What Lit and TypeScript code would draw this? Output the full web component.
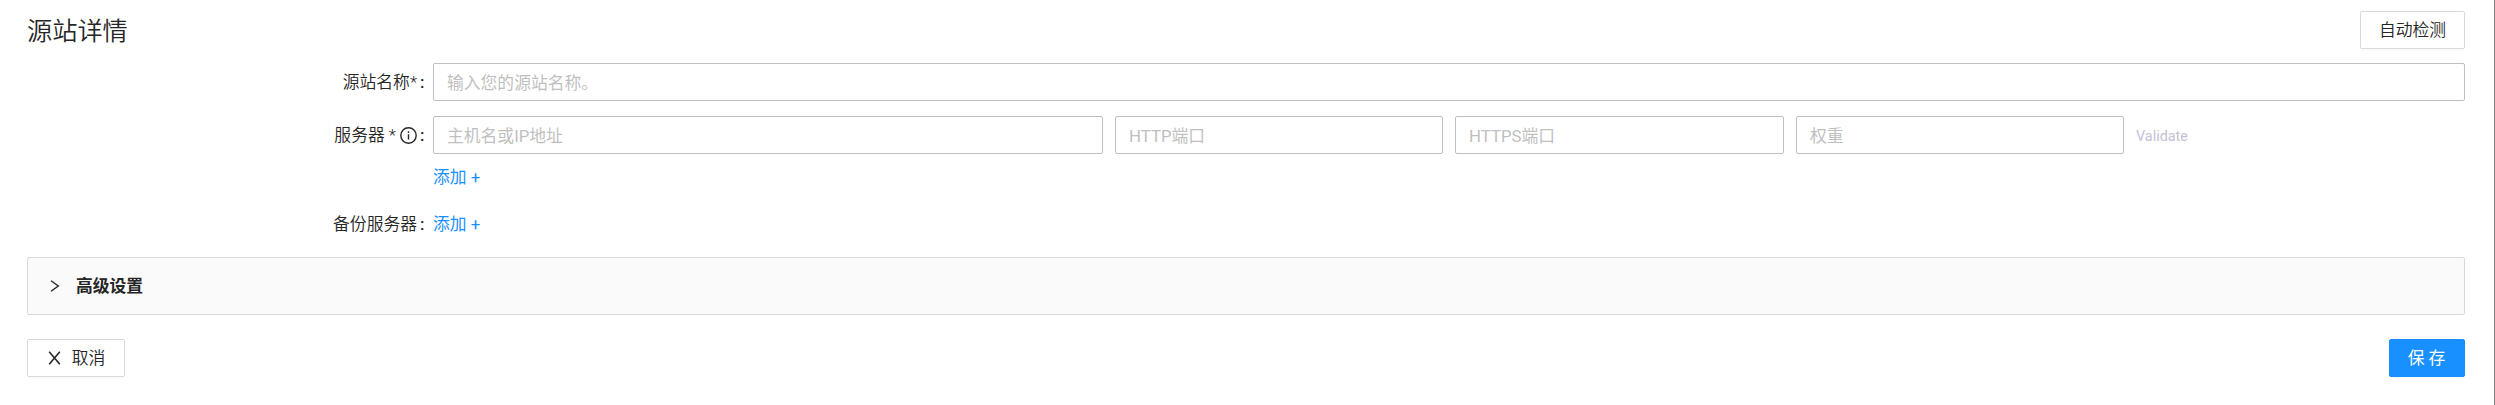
import { LitElement, html, css } from "lit";
import { customElement } from "lit/decorators.js";

@customElement("app-root")
export class AppRoot extends LitElement {
  static styles = css`
    :host {
      display: block;
      box-sizing: border-box;
      height: 405px;
      padding: 11px 29px 0 27px;
      border-right: 1px solid #808080;
      background: #fff;
      color: #262626;
      font-family: Roboto, "Noto Sans CJK SC", sans-serif;
      font-size: 16.8px;
      font-weight: 400;
      line-height: 26px;
    }
    * { box-sizing: border-box; }
    .head, .foot { display: flex; justify-content: space-between; height: 38px; }
    h1 { margin: 0; font-size: 25.2px; font-weight: 350; line-height: 41px; }
    button {
      display: flex;
      align-items: center;
      justify-content: center;
      height: 38px;
      padding: 0;
      border: 1px solid #d9d9d9;
      border-radius: 2px;
      background: #fff;
      box-shadow: 0 2px 0 rgba(0, 0, 0, 0.016);
      color: inherit;
      font: inherit;
      font-weight: 350;
    }
    .detect { width: 105px; }
    .cancel { width: 98px; gap: 11px; padding-left: 1px; }
    .save {
      width: 76px;
      border-color: #1890ff;
      background: #1890ff;
      color: #fff;
      font-weight: 400;
      letter-spacing: 4px;
      padding-left: 3px;
    }
    .row { display: grid; grid-template-columns: 396px 1fr; column-gap: 10px; }
    .name { margin-top: 14px; }
    .server { margin-top: 15px; }
    .label { display: flex; justify-content: flex-end; align-items: center; height: 38px; white-space: pre; font-weight: 350; }
    .colon { width: 3px; margin-left: 3px; font-weight: 500; }
    .fields { display: grid; grid-template-columns: 670px 328px 329px 328px auto; column-gap: 12px; align-items: center; }
    input {
      width: 100%;
      height: 38px;
      padding: 1px 13px 0;
      border: 1px solid #bfbfbf;
      border-radius: 2px;
      background: #fff;
      font: inherit;
      outline: none;
    }
    input::placeholder { color: #bfbfbf; opacity: 1; }
    .validate { color: #c5c1d4; font-size: 14.4px; padding-top: 3px; }
    .link { color: #1890ff; text-decoration: none; }
    .more { margin: 10px 0 0 406px; height: 26px; }
    .backup { margin-top: 15px; align-items: center; height: 38px; }
    .panel {
      display: flex;
      align-items: center;
      height: 58px;
      margin-top: 14px;
      padding-left: 22px;
      border: 1px solid #d9d9d9;
      border-radius: 2px;
      background: #fafafa;
      font-weight: 700;
      gap: 16px;
    }
    .foot { margin-top: 24px; }
    svg { display: block; fill: none; stroke: currentColor; }
  `;

  render() {
    return html`
      <div class="head">
        <h1>源站详情</h1>
        <button class="detect">自动检测</button>
      </div>
      <div class="row name">
        <label class="label">源站名称*<span class="colon">:</span></label>
        <input placeholder="输入您的源站名称。" />
      </div>
      <div class="row server">
        <label class="label">服务器 * <svg width="17" height="17" viewBox="0 0 17 17" stroke-width="1.4">
            <circle cx="8.5" cy="8.5" r="7.7"></circle>
            <path d="M8.5 7.2V12.6M8.5 4.3V5.9"></path>
          </svg><span class="colon">:</span></label>
        <div class="fields">
          <input placeholder="主机名或IP地址" />
          <input placeholder="HTTP端口" />
          <input placeholder="HTTPS端口" />
          <input placeholder="权重" />
          <span class="validate">Validate</span>
        </div>
      </div>
      <div class="more"><a class="link">添加 +</a></div>
      <div class="row backup">
        <label class="label">备份服务器<span class="colon">:</span></label>
        <a class="link">添加 +</a>
      </div>
      <div class="panel">
        <svg width="10" height="12" viewBox="0 0 10 12" stroke-width="1.4"><path d="M1 0.8L8.3 6L1 11.2"></path></svg>
        <span>高级设置</span>
      </div>
      <div class="foot">
        <button class="cancel">
          <svg width="13" height="14" viewBox="0 0 13 14" stroke-width="1.6"><path d="M1.2 0.8L11.8 13.2M11.8 0.8L1.2 13.2"></path></svg>
          <span>取消</span>
        </button>
        <button class="save">保存</button>
      </div>
    `;
  }
}
